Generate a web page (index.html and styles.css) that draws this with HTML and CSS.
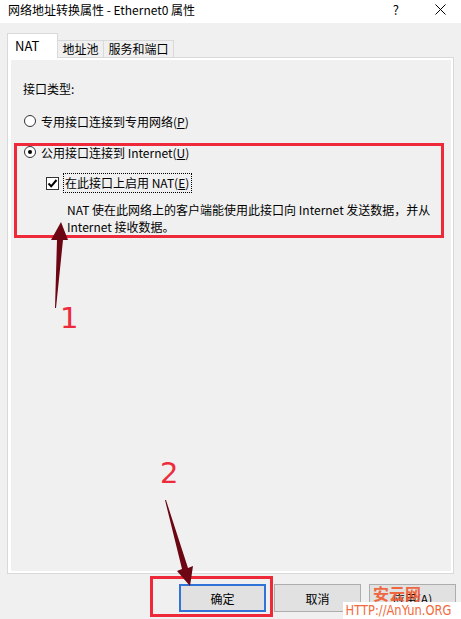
FILE: index.html
```html
<!DOCTYPE html>
<html lang="zh-CN">
<head>
  <meta charset="UTF-8">
  <title>网络地址转换属性 - Ethernet0 属性</title>
  <link rel="stylesheet" href="styles.css">
</head>
<body>
  <div class="dialog">
    <div class="titlebar">
      <span class="title">网络地址转换属性 - Ethernet0 属性</span>
      <span class="help">?</span>
      <svg class="close" width="11" height="11" viewBox="0 0 11 11">
        <path d="M0.5 0.5 L10.5 10.5 M10.5 0.5 L0.5 10.5" stroke="#000" stroke-width="1"/>
      </svg>
    </div>

    <div class="tabs">
      <div class="tab active">NAT</div>
      <div class="tab">地址池</div>
      <div class="tab wide">服务和端口</div>
    </div>

    <div class="panel">
      <div class="page">
        <div class="group-label">接口类型:</div>

        <div class="option first">
          <span class="radio"></span>
          <span>专用接口连接到专用网络(<u>P</u>)</span>
        </div>
        <div class="option">
          <span class="radio checked"></span>
          <span>公用接口连接到 Internet(<u>U</u>)</span>
        </div>

        <div class="check-row">
          <span class="checkbox">
            <svg width="11" height="11" viewBox="0 0 11 11">
              <path d="M1.5 5.5 L4.2 8.3 L9.5 2" fill="none" stroke="#000" stroke-width="2"/>
            </svg>
          </span>
          <span class="focus">在此接口上启用 NAT(<u>E</u>)</span>
        </div>

        <div class="desc">
          <div>NAT 使在此网络上的客户端能使用此接口向 Internet 发送数据，并从</div>
          <div>Internet 接收数据。</div>
        </div>
      </div>
    </div>

    <div class="buttons">
      <button class="btn default">确定</button>
      <button class="btn">取消</button>
      <button class="btn">应用(<u>A</u>)</button>
    </div>

    <!-- annotations drawn over the screenshot -->
    <div class="mark mark-options"></div>
    <div class="mark mark-ok"></div>
    <svg class="arrows" width="461" height="619" viewBox="0 0 461 619">
      <polygon points="61,222 68,240 63,240 56,308 55,308 57,240 51,240" fill="#6b0612"/>
      <polygon points="190,586 177,571 182,569 165,500 166,500 188,568 193,566" fill="#6b0612"/>
    </svg>
    <div class="num num-1">1</div>
    <div class="num num-2">2</div>

    <div class="wm-logo">安云网</div>
    <div class="wm-url"><span>HTTP://AnYun.ORG</span></div>
  </div>
</body>
</html>
```

FILE: styles.css
```css
body {
  margin: 0;
  background: #fff;
}
.dialog {
  position: relative;
  width: 461px;
  height: 619px;
  overflow: hidden;
  background: #f0f0f0;
  font-family: "Noto Sans CJK SC", sans-serif;
  font-size: 12px;
  color: #000;
}
.titlebar {
  display: flex;
  align-items: center;
  height: 23px;
  padding-left: 8px;
  background: #fff;
  line-height: 16px;
}
.title {
  flex: 1;
  margin-top: -3px;
}
.help {
  font-size: 13px;
  margin-right: 36px;
  margin-top: -3px;
}
.close {
  margin-right: 15px;
  margin-top: -4px;
}

.tabs {
  display: flex;
  align-items: flex-end;
  height: 24px;
  margin: 10px 0 0 7px;
}
.tab {
  box-sizing: border-box;
  height: 17px;
  width: 47px;
  margin-left: -1px;
  border: 1px solid #d9d9d9;
  border-bottom: none;
  background: #f0f0f0;
  text-align: center;
  line-height: 16px;
}
.tab.wide {
  width: 71px;
}
.tab.active {
  position: relative;
  z-index: 1;
  width: 51px;
  height: 25px;
  margin-left: 0;
  margin-bottom: -1px;
  padding-left: 7px;
  background: #fff;
  text-align: left;
  line-height: 23px;
  font-size: 13px;
}

.panel {
  box-sizing: border-box;
  width: 447px;
  height: 517px;
  margin-left: 7px;
  border: 1px solid #d9d9d9;
}
.page {
  box-sizing: border-box;
  height: 100%;
  border: 2px solid #fff;
  border-left-width: 3px;
  padding-left: 12px;
}
.group-label {
  margin-top: 20px;
  line-height: 18px;
}
.option {
  display: flex;
  align-items: center;
  gap: 5px;
  height: 18px;
  margin-top: 13px;
}
.option.first {
  margin-top: 14px;
}
.radio {
  box-sizing: border-box;
  position: relative;
  width: 12px;
  height: 12px;
  margin-left: 1px;
  border: 1px solid #333;
  border-radius: 50%;
  background: #fff;
}
.radio.checked::after {
  content: "";
  position: absolute;
  left: 3px;
  top: 3px;
  width: 4px;
  height: 4px;
  border-radius: 50%;
  background: #000;
}
.check-row {
  display: flex;
  align-items: center;
  gap: 4px;
  height: 20px;
  margin: 12px 0 0 23px;
}
.checkbox {
  box-sizing: border-box;
  display: flex;
  align-items: center;
  justify-content: center;
  width: 13px;
  height: 13px;
  border: 1px solid #333;
  background: #fff;
}
.focus {
  border: 1px dotted #000;
  padding: 0 2px 0 1px;
  line-height: 18px;
}
.desc {
  margin: 8px 0 0 44px;
  line-height: 17px;
  white-space: nowrap;
}

.buttons {
  display: flex;
  justify-content: flex-end;
  gap: 8px;
  margin-top: 10px;
  padding-right: 5px;
}
.btn {
  box-sizing: border-box;
  width: 87px;
  height: 28px;
  border: 1px solid #adadad;
  background: #e1e1e1;
  font-family: "Noto Sans CJK SC", sans-serif;
  font-size: 12px;
  color: #000;
  padding: 0;
}
.btn.default {
  border: 2px solid #3173d6;
}

.mark {
  position: absolute;
  box-sizing: border-box;
  border: 3px solid #ee2a3a;
}
.mark-options {
  left: 14px;
  top: 143px;
  width: 430px;
  height: 95px;
}
.mark-ok {
  left: 150px;
  top: 576px;
  width: 123px;
  height: 41px;
}
.arrows {
  position: absolute;
  left: 0;
  top: 0;
  pointer-events: none;
}
.num {
  position: absolute;
  font-family: "DejaVu Sans", sans-serif;
  font-size: 29px;
  line-height: 29px;
  color: #ee2b3b;
}
.num-1 {
  left: 60px;
  top: 304px;
}
.num-2 {
  left: 160px;
  top: 459px;
}
.wm-logo {
  position: absolute;
  left: 373px;
  top: 583px;
  font-size: 16px;
  font-weight: bold;
  line-height: 20px;
  color: #f05a30;
  opacity: 0.9;
}
.wm-url {
  position: absolute;
  left: 343px;
  top: 602px;
  width: 118px;
  height: 17px;
  background: #fff;
}
.wm-url span {
  display: block;
  padding-left: 3px;
  font-family: "DejaVu Sans", sans-serif;
  font-size: 13.5px;
  line-height: 17px;
  color: #f26a3c;
  transform: scaleX(0.85);
  transform-origin: left center;
  white-space: nowrap;
}
```
